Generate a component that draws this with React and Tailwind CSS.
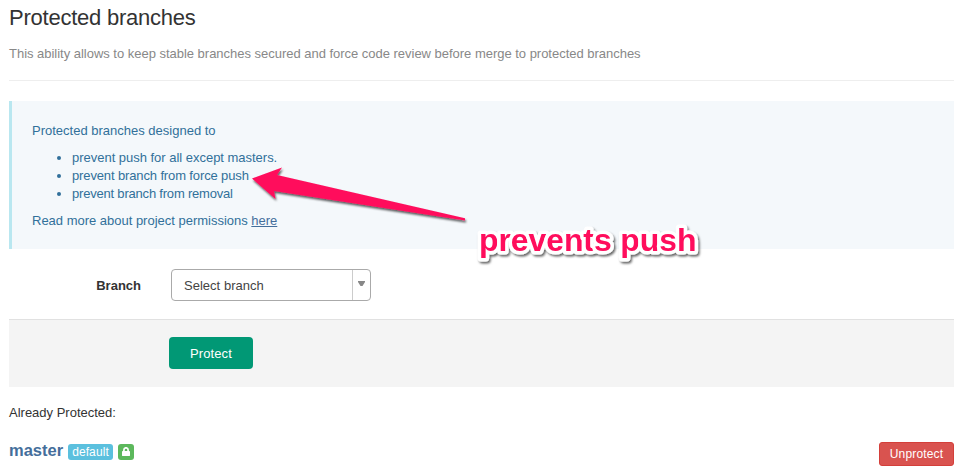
import React from "react";

const rules = [
  { text: "prevent push for all except masters.", tracking: "tracking-[-0.02px]" },
  { text: "prevent branch from force push", tracking: "tracking-[-0.13px]" },
  { text: "prevent branch from removal", tracking: "tracking-[-0.2px]" },
];

function Notice() {
  return (
    <section className="border-l-3 border-[#b9e7f0] bg-[#f4f8fb] px-5 pt-[21px] pb-[19px] text-[#31709a]">
      <p className="mb-[9px]">Protected branches designed to</p>
      <ul className="mb-[9px] pl-10">
        {rules.map((rule) => (
          <li key={rule.text} className={"relative " + rule.tracking}>
            <span className="absolute top-[7px] -left-[15px] size-1 rounded-full bg-[#31709a]" />
            {rule.text}
          </li>
        ))}
      </ul>
      <p className="tracking-[-0.01px]">
        Read more about project permissions{" "}
        <a href="#" className="text-[#446e9b] underline">here</a>
      </p>
    </section>
  );
}

function BranchForm() {
  return (
    <form>
      <div className="flex h-[70px] items-start pt-5">
        <label className="w-[132px] pt-px text-right leading-8 font-bold text-[#333]">Branch</label>
        <div className="ml-[30px] flex h-8 w-[200px] items-center rounded border border-[#aaa] bg-white text-[#444]">
          <span className="flex-1 pt-[2px] pl-3 tracking-[0.02px]">Select branch</span>
          <span className="flex h-full w-[18px] border-l border-[#ccc] pt-[11px] pl-[5px]">
            <svg width="7" height="6" viewBox="0 0 7 6">
              <path d="M0 0H7V1L4.500 5H2.500L0 1Z" fill="#888" />
            </svg>
          </span>
        </div>
      </div>
      <div className="h-[68px] border-t border-[#e1e1e1] bg-[#f4f4f4] pt-[17px] pl-40">
        <button type="button" className="h-8 w-[84px] rounded bg-[#019875] pt-[2px] tracking-[0.1px] text-white">Protect</button>
      </div>
    </form>
  );
}

function ProtectedBranch() {
  return (
    <div className="mt-5 flex h-6 items-start justify-between">
      <div className="flex items-start pt-[2px]">
        <strong className="-mt-[3px] w-[59px] text-[16.5px] leading-[18px] text-[#446e9b]">master</strong>
        <span className="h-4 w-[45px] rounded-[3px] bg-[#5bc0de] text-center text-xs leading-4 tracking-[0.1px] text-white">default</span>
        <span className="ml-[5px] flex size-4 items-start justify-center rounded-[3px] bg-[#5cb85c] pt-[3px]">
          <svg width="8" height="9" viewBox="0 0 8 9">
            <path d="M1.900 4.500V2.900a2.100 2.100 0 0 1 4.200 0V4.500" fill="none" stroke="white" strokeWidth="1.700" />
            <rect y="4" width="8" height="5" rx="0.4" fill="white" />
          </svg>
        </span>
      </div>
      <button type="button" className="h-6 w-[75px] rounded-[3px] border border-[#d43f3a] bg-[#d9534f] text-xs tracking-[0.15px] text-white">Unprotect</button>
    </div>
  );
}

function Annotation() {
  return (
    <svg className="pointer-events-none absolute top-0 left-0" width="957" height="472" viewBox="0 0 957 472">
      <defs>
        <filter id="arrow-shadow" x="-10%" y="-20%" width="120%" height="150%">
          <feDropShadow dx="1" dy="2" stdDeviation="1.2" floodColor="#000" floodOpacity="0.65" />
        </filter>
        <filter id="text-shadow" x="-5%" y="-20%" width="110%" height="150%">
          <feDropShadow dx="1.5" dy="2" stdDeviation="1" floodColor="#000" floodOpacity="0.6" />
        </filter>
      </defs>
      <path d="M252 178.500L282 167.500L277 175L465 218.200V220.500L274 191L275.500 199Z" fill="#ff0d5c" filter="url(#arrow-shadow)" />
      <text
        x="479"
        y="251"
        textLength="217.500"
        className="text-[32px] font-bold"
        fill="#ff0d5c"
        stroke="white"
        strokeWidth="7"
        strokeLinejoin="round"
        paintOrder="stroke"
        filter="url(#text-shadow)"
      >
        prevents push
      </text>
    </svg>
  );
}

export default function App() {
  return (
    <main className="relative h-[472px] w-[957px] overflow-hidden bg-white pr-[3px] pl-[9px] font-['Liberation_Sans',Arial,sans-serif] text-[13px] leading-[18px] text-[#333]">
      <h1 className="pt-[5px] text-[22px] leading-[26px] tracking-[-0.23px]">Protected branches</h1>
      <p className="mt-[14px] tracking-[-0.02px] text-[#888]">
        This ability allows to keep stable branches secured and force code review before merge to protected branches
      </p>
      <hr className="mt-[17px] mb-5 border-[#eee]" />
      <Notice />
      <BranchForm />
      <p className="mt-[17px]">Already Protected:</p>
      <ProtectedBranch />
      <Annotation />
    </main>
  );
}
